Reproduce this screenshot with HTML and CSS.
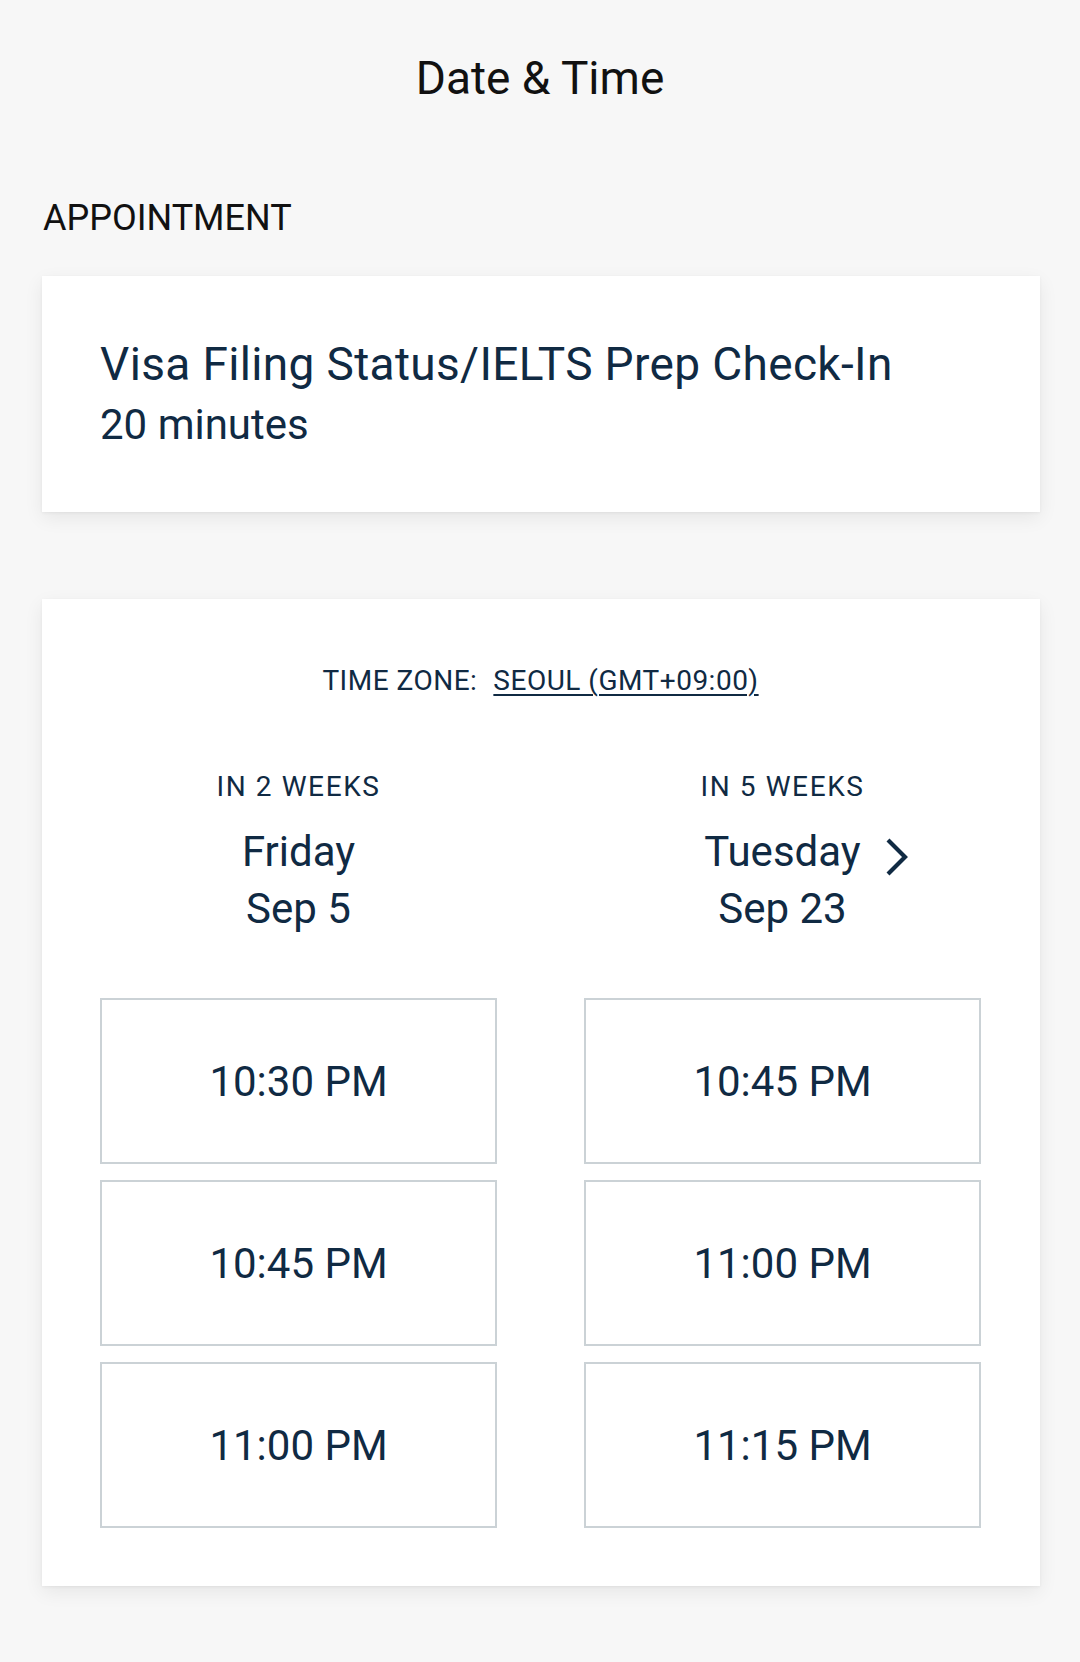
FILE: index.html
```html
<!DOCTYPE html>
<html lang="en">
<head>
<meta charset="utf-8">
<title>Date &amp; Time</title>
<link rel="stylesheet" href="styles.css">
</head>
<body>
<div class="page">
  <header class="topbar">
    <h1 class="title">Date &amp; Time</h1>
  </header>

  <div class="section-label">APPOINTMENT</div>

  <section class="card appt">
    <div class="appt-name">Visa Filing Status/IELTS Prep Check-In</div>
    <div class="appt-dur">20 minutes</div>
  </section>

  <section class="card slots">
    <div class="tz">
      <span class="tz-label">TIME ZONE:</span>
      <a class="tz-link" href="#">SEOUL (GMT+09:00)</a>
    </div>

    <div class="days">
      <div class="day">
        <div class="day-head">
          <div class="rel">IN 2 WEEKS</div>
          <div class="dname"><span class="dname-text">Friday</span></div>
          <div class="ddate">Sep 5</div>
        </div>
        <button class="slot">10:30 PM</button>
        <button class="slot">10:45 PM</button>
        <button class="slot">11:00 PM</button>
      </div>

      <div class="day">
        <div class="day-head">
          <div class="rel">IN 5 WEEKS</div>
          <div class="dname"><span class="dname-text">Tuesday<svg class="chev" viewBox="0 0 26 38" width="26" height="38" aria-hidden="true"><polyline points="4,2 21,19 4,36" fill="none" stroke="#102a43" stroke-width="4.2" stroke-linecap="butt" stroke-linejoin="miter"/></svg></span></div>
          <div class="ddate">Sep 23</div>
        </div>
        <button class="slot">10:45 PM</button>
        <button class="slot">11:00 PM</button>
        <button class="slot">11:15 PM</button>
      </div>
    </div>
  </section>
</div>
</body>
</html>
```

FILE: styles.css
```css
html, body {
  margin: 0;
  padding: 0;
}

body {
  background: #f7f7f7;
  font-family: Roboto, "Noto Sans", "Liberation Sans", sans-serif;
  color: #102a43;
}

.page {
  width: 1080px;
  min-height: 1662px;
  display: flex;
  flex-direction: column;
}

.topbar {
  padding-top: 50px;
  display: flex;
  justify-content: center;
}

.title {
  margin: 0;
  font-size: 46px;
  line-height: 56px;
  font-weight: 400;
  color: #111111;
}

.section-label {
  margin: 90px 0 0 43px;
  font-size: 36px;
  line-height: 44px;
  color: #111111;
}

.card {
  margin: 0 40px 0 42px;
  background: #ffffff;
  box-shadow: 0 6px 18px rgba(0, 0, 0, 0.07), 0 1px 3px rgba(0, 0, 0, 0.05);
}

.appt {
  margin-top: 36px;
  padding: 60px 60px 58px 58px;
}

.appt-name {
  font-size: 46px;
  line-height: 56px;
  letter-spacing: 0.35px;
}

.appt-dur {
  margin-top: 4px;
  font-size: 42px;
  line-height: 58px;
}

.slots {
  margin-top: 87px;
  padding: 65px 59px 58px 58px;
}

.tz {
  display: flex;
  justify-content: center;
  gap: 16px;
  font-size: 28px;
  line-height: 34px;
  letter-spacing: 0.5px;
}

.tz-link {
  color: #102a43;
  text-decoration: underline;
  text-decoration-thickness: 2px;
  text-underline-offset: 4px;
}

.days {
  margin-top: 72px;
  display: grid;
  grid-template-columns: 397px 397px;
  column-gap: 87px;
}

.day {
  display: flex;
  flex-direction: column;
  gap: 16px;
}

.day-head {
  display: flex;
  flex-direction: column;
  align-items: center;
  margin-bottom: 45px;
}

.rel {
  font-size: 28px;
  line-height: 34px;
  letter-spacing: 1.6px;
}

.dname {
  margin-top: 19px;
  font-size: 42px;
  line-height: 57px;
}

.dname-text {
  position: relative;
}

.chev {
  position: absolute;
  left: calc(100% + 23px);
  top: 11px;
}

.ddate {
  font-size: 42px;
  line-height: 57px;
}

.slot {
  height: 166px;
  border: 2px solid #cbd2d6;
  background: #ffffff;
  font-family: inherit;
  font-size: 42px;
  color: #102a43;
  padding: 0;
  margin: 0;
  display: flex;
  align-items: center;
  justify-content: center;
}
```
